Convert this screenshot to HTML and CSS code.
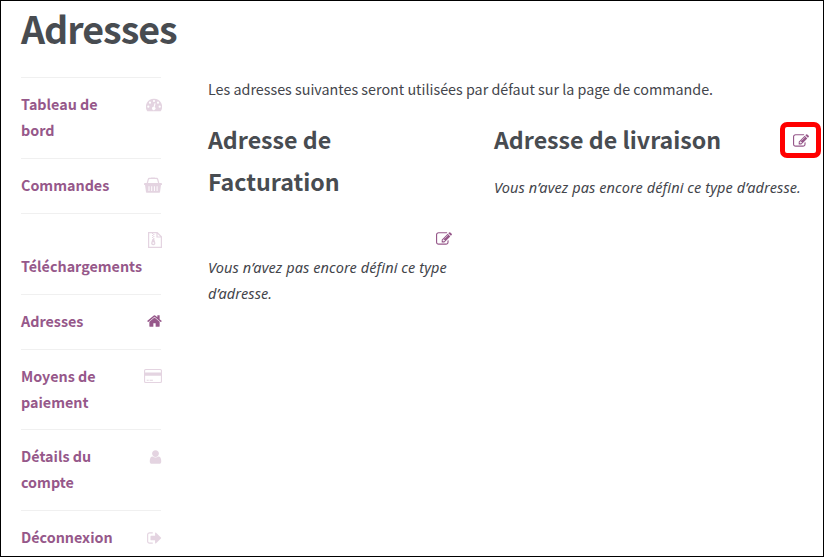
FILE: index.html
```html
<!DOCTYPE html>
<html lang="fr">
<head>
    <meta charset="UTF-8">
    <meta name="viewport" content="width=device-width, initial-scale=1.0">
    <title>Adresses</title>
    <link rel="stylesheet" href="styles.css">
</head>
<body>
    <div class="page">
        <h1>Adresses</h1>

        <div class="account">
            <nav class="account-nav">
                <ul>
                    <li>
                        <a href="#">
                            <svg class="icon" width="16" height="16" viewBox="0 0 16 16"><path fill-rule="evenodd" d="M8 1.7a8 8 0 0 1 6.8 12.3q-.2.3-.6.3H1.8q-.4 0-.6-.3A8 8 0 0 1 8 1.700zM8 2.900a1.100 1.100 0 1 0 0 2.200 1.100 1.100 0 0 0 0-2.200zM4 4.600a1.100 1.100 0 1 0 0 2.200 1.100 1.100 0 0 0 0-2.200zM12 4.600a1.100 1.100 0 1 0 0 2.200 1.100 1.100 0 0 0 0-2.200zM2.300 8.600a1.100 1.100 0 1 0 0 2.200 1.100 1.100 0 0 0 0-2.200zM13.700 8.600a1.100 1.100 0 1 0 0 2.200 1.100 1.100 0 0 0 0-2.200zM8.500 6.200L7.600 9.700a1.700 1.700 0 1 0 1.100.3l.9-3.500z"/></svg>
                            Tableau de bord
                        </a>
                    </li>
                    <li>
                        <a href="#">
                            <svg class="icon" width="18" height="16" viewBox="0 0 18 16"><path fill-rule="evenodd" d="M.9 6h16.200a.9.9 0 0 1 0 2.100H17l-1 6.800q-.2.900-1.100.900H3.100q-.9 0-1.100-.9L1 8.100H.9A.9.9 0 0 1 .9 6zM4.500 9.300v4.800h1V9.300zM7.200 9.300v4.800h1V9.300zM9.900 9.300v4.800h1V9.300zM12.600 9.300v4.800h1V9.300z"/><path class="line" d="M3.300 6l1-3.700q.2-.9 1.200-.9h7q1 0 1.200.9l1 3.700M7 1h4"/></svg>
                            Commandes
                        </a>
                    </li>
                    <li>
                        <a href="#">
                            <svg class="icon" width="14" height="16" viewBox="0 0 14 16"><path class="line" d="M.6.600h8.600l4.200 4.200v10.600H.6zM9 .8v4.200h4.200"/><path fill-rule="evenodd" d="M4 1h1.200v1H4zM5.200 2h1.200v1H5.200zM4 3h1.200v1H4zM5.200 4h1.200v1H5.200zM4 5h1.200v1H4zM5.200 6h1.200v1H5.200zM4.400 7h1.800l1.100 3.800q.4 2.300-2 2.400-2.500-.1-2.100-2.400zM5.300 10.300q-1 0-1 .8t1 .8 1-.8-1-.8z"/></svg>
                            Téléchargements
                        </a>
                    </li>
                    <li class="active">
                        <a href="#">
                            <svg class="icon" width="15" height="16" viewBox="64 0 1664 1792"><path d="M1472 992v480q0 26-19 45t-45 19h-384v-384h-256v384h-384q-26 0-45-19t-19-45v-480q0-1 .5-3t.5-3l575-474 575 474q1 2 1 6zm223-69l-62 74q-8 9-21 11h-3q-13 0-21-7l-692-577-692 577q-12 8-24 7-13-2-21-11l-62-74q-8-10-7-23.500t11-21.500l719-599q32-26 76-26t76 26l244 204v-195q0-14 9-23t23-9h192q14 0 23 9t9 23v408l219 182q10 8 11 21.500t-7 23.500z"/></svg>
                            Adresses
                        </a>
                    </li>
                    <li>
                        <a href="#">
                            <svg class="icon" width="18" height="16" viewBox="0 0 18 16"><path fill-rule="evenodd" d="M1.700 1h14.600Q18 1 18 2.600v10.800q0 1.600-1.700 1.600H1.700Q0 15 0 13.400V2.600Q0 1 1.700 1zM1.700 2.100q-.6 0-.6.600v1.800h15.800V2.700q0-.6-.6-.6zM1.100 7.800v5.500q0 .6.6.6h14.600q.6 0 .6-.6V7.800zM2.700 11.700h2v1.100h-2zM5.600 11.700h3.300v1.100H5.600z"/></svg>
                            Moyens de paiement
                        </a>
                    </li>
                    <li>
                        <a href="#">
                            <svg class="icon" width="13" height="16" viewBox="192 0 1408 1792"><path d="M1536 1399q0 109-62.500 187t-150.500 78h-854q-88 0-150.500-78t-62.500-187q0-85 8.500-160.500t31.500-152 58.500-131 94-89 134.500-34.500q131 128 313 128t313-128q76 0 134.500 34.500t94 89 58.500 131 31.500 152 8.500 160.500zm-256-887q0 159-112.500 271.500t-271.500 112.500-271.500-112.500-112.500-271.500 112.500-271.500 271.500-112.500 271.500 112.500 112.500 271.500z"/></svg>
                            Détails du compte
                        </a>
                    </li>
                    <li>
                        <a href="#">
                            <svg class="icon" width="15" height="16" viewBox="64 0 1664 1792"><path d="M704 1440q0 4 1 20t.5 26.500-3 23.500-10 19.500-20.500 6.500h-320q-119 0-203.500-84.500t-84.500-203.500v-704q0-119 84.500-203.500t203.500-84.500h320q13 0 22.500 9.500t9.500 22.500q0 4 1 20t.5 26.500-3 23.500-10 19.500-20.500 6.500h-320q-66 0-113 47t-47 113v704q0 66 47 113t113 47h312l11.500 1 11.500 3 8 5.500 7 9 2 13.500zm928-544q0 26-19 45l-544 544q-19 19-45 19t-45-19-19-45v-288h-448q-26 0-45-19t-19-45v-384q0-26 19-45t45-19h448v-288q0-26 19-45t45-19 45 19l544 544q19 19 19 45z"/></svg>
                            Déconnexion
                        </a>
                    </li>
                </ul>
            </nav>

            <main class="content">
                <p>Les adresses suivantes seront utilisées par défaut sur la page de commande.</p>

                <div class="addresses">
                    <section class="address billing">
                        <header>
                            <h3>Adresse de Facturation</h3>
                            <a href="#" class="edit" aria-label="Modifier">
                                <svg width="16" height="16" viewBox="0 0 1792 1792"><path d="M888 1184l116-116-152-152-116 116v56h96v96h56zm440-720q-16-16-33 1l-350 350q-17 17-1 33t33-1l350-350q17-17 1-33zm80 594v190q0 119-84.500 203.500t-203.500 84.500h-832q-119 0-203.500-84.500t-84.500-203.500v-832q0-119 84.500-203.500t203.500-84.500h832q63 0 117 25 15 7 18 23 3 17-9 29l-49 49q-14 14-32 8-23-6-45-6h-832q-66 0-113 47t-47 113v832q0 66 47 113t113 47h832q66 0 113-47t47-113v-126q0-13 9-22l64-64q15-15 35-7t20 29zm-96-738l288 288-672 672h-288v-288zm444 132l-92 92-288-288 92-92q28-28 68-28t68 28l152 152q28 28 28 68t-28 68z"/></svg>
                            </a>
                        </header>
                        <address>Vous n’avez pas encore défini ce type d’adresse.</address>
                    </section>

                    <section class="address shipping">
                        <header>
                            <h3>Adresse de livraison</h3>
                            <a href="#" class="edit highlight" aria-label="Modifier">
                                <svg width="16" height="16" viewBox="0 0 1792 1792"><path d="M888 1184l116-116-152-152-116 116v56h96v96h56zm440-720q-16-16-33 1l-350 350q-17 17-1 33t33-1l350-350q17-17 1-33zm80 594v190q0 119-84.500 203.500t-203.500 84.500h-832q-119 0-203.500-84.500t-84.500-203.500v-832q0-119 84.500-203.500t203.500-84.500h832q63 0 117 25 15 7 18 23 3 17-9 29l-49 49q-14 14-32 8-23-6-45-6h-832q-66 0-113 47t-47 113v832q0 66 47 113t113 47h832q66 0 113-47t47-113v-126q0-13 9-22l64-64q15-15 35-7t20 29zm-96-738l288 288-672 672h-288v-288zm444 132l-92 92-288-288 92-92q28-28 68-28t68 28l152 152q28 28 28 68t-28 68z"/></svg>
                            </a>
                        </header>
                        <address>Vous n’avez pas encore défini ce type d’adresse.</address>
                    </section>
                </div>
            </main>
        </div>
    </div>
</body>
</html>
```

FILE: styles.css
```css
* {
    box-sizing: border-box;
    margin: 0;
    padding: 0;
}

body {
    font-family: "Source Sans Pro", "Noto Sans CJK JP", sans-serif;
    font-size: 14.33px;
    line-height: 25.888px;
    color: #43454b;
    background: #fff;
}

.page {
    height: 557px;
    padding: 0 14px 0 20px;
    border: 1px solid #000;
    overflow: hidden;
}

h1 {
    height: 76px;
    font-size: 37.6px;
    line-height: 53px;
    letter-spacing: -1px;
    color: #484c51;
}

.account {
    display: flex;
    gap: 47px;
}

/* Navigation */
.account-nav {
    width: 140px;
    flex: none;
}

.account-nav ul {
    list-style: none;
    border-top: 1px solid #f0f0f0;
}

.account-nav li {
    border-bottom: 1px solid #f0f0f0;
}

.account-nav a {
    display: flow-root;
    padding: 13px 0 15px;
    margin-right: -1px;
    font-weight: 700;
    color: #96588a;
    text-decoration: none;
}

.icon {
    float: right;
    margin: 5.5px 0 4.5px 15px;
    fill: #96588a;
    opacity: 0.25;
}

.icon .line {
    fill: none;
    stroke: #96588a;
    stroke-width: 1.2;
}

.active .icon {
    opacity: 1;
}

/* Addresses */
.content {
    flex: 1;
    margin-top: -1px;
}

.addresses {
    display: flex;
    gap: 42px;
    margin-top: 16px;
}

.billing {
    width: 244px;
}

.shipping {
    flex: 1;
}

.address header {
    display: flex;
    flex-wrap: wrap;
    justify-content: space-between;
    margin-bottom: 15px;
}

.billing header {
    margin-bottom: 3px;
}

.billing h3 {
    width: 180px;
    margin-right: 60px;
}

h3 {
    font-size: 23.2px;
    line-height: 42px;
    color: #484c51;
}

.edit {
    display: flex;
    align-items: center;
    height: 42px;
    margin-left: auto;
}

.billing .edit {
    height: 26px;
    margin-top: 24px;
}

.edit svg {
    fill: #96588a;
}

.highlight {
    width: 41px;
    height: 36px;
    margin: 4px -12px 2px auto;
    padding-top: 2px;
    justify-content: center;
    border: 5px solid #f00;
    border-radius: 7px;
}

address {
    font-family: "Source Sans Pro", "Noto Sans", sans-serif;
    font-style: italic;
    font-size: 14.5px;
    letter-spacing: 0.1px;
}
```
